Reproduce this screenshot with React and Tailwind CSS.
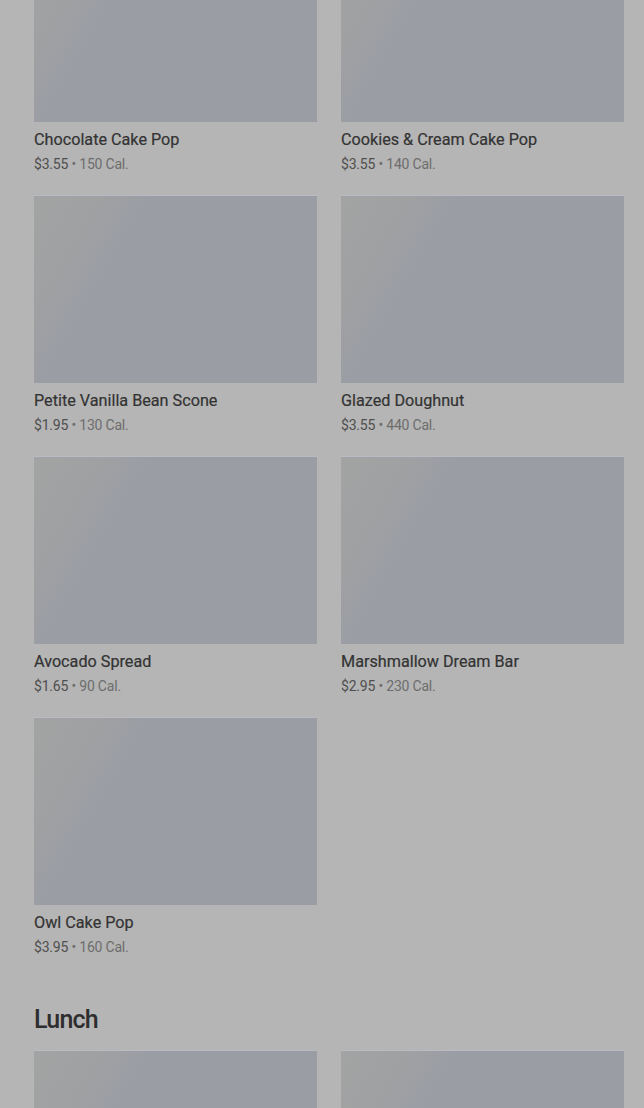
import React from 'react';

const breakfast = [
  { name: 'Chocolate Cake Pop', price: '$3.55', cal: '150 Cal.' },
  { name: 'Cookies & Cream Cake Pop', price: '$3.55', cal: '140 Cal.' },
  { name: 'Petite Vanilla Bean Scone', price: '$1.95', cal: '130 Cal.' },
  { name: 'Glazed Doughnut', price: '$3.55', cal: '440 Cal.' },
  { name: 'Avocado Spread', price: '$1.65', cal: '90 Cal.' },
  { name: 'Marshmallow Dream Bar', price: '$2.95', cal: '230 Cal.' },
  { name: 'Owl Cake Pop', price: '$3.95', cal: '160 Cal.' },
];

const Thumb = () => (
  <div className="h-[188px] w-full bg-[linear-gradient(120deg,#a2a3a3_0%,#a0a1a2_16%,#9a9da4_30%,#9a9da4_100%)] border-t border-[#b9bac3]" />
);

const MenuItem = ({ item }) => (
  <div className="flex flex-col">
    <Thumb />
    <div className="mt-[6px] text-[16.2px] leading-6 text-[#333333] [-webkit-text-stroke:0.2px_#333333]">{item.name}</div>
    <div className="mt-[2px] text-[14px] leading-5 tracking-[-0.2px] text-[#4f4f4f]">
      {item.price} <span className="text-[#6d6d6d]">• {item.cal}</span>
    </div>
  </div>
);

export default function App() {
  return (
    <div
      className="min-h-[1108px] w-[644px] overflow-hidden bg-[#b5b5b5] pl-[34px] pr-5"
      style={{ fontFamily: 'Roboto, "Liberation Sans", sans-serif' }}
    >
      <div className="-mt-[66px] grid grid-cols-2 gap-x-6 gap-y-[21px]">
        {breakfast.map((item) => (
          <MenuItem key={item.name} item={item} />
        ))}
      </div>

      <h2 className="mt-[47px] text-[25px] leading-8 font-medium tracking-[-0.8px] text-[#2e2e2e]">Lunch</h2>

      <div className="mt-[14px] grid grid-cols-2 gap-x-6">
        <Thumb />
        <Thumb />
      </div>
    </div>
  );
}
